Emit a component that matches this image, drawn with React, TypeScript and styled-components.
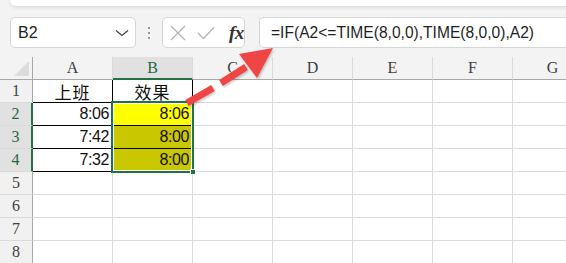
import React from "react";
import styled, { createGlobalStyle } from "styled-components";

const Global = createGlobalStyle`
  html, body { margin: 0; padding: 0; }
  body { background: #f3f3f3; width: 566px; height: 263px; overflow: hidden; font-family: "Liberation Sans", Arial, sans-serif; }
  * { box-sizing: border-box; }
`;

const Page = styled.div`
  position: relative;
  width: 566px;
  height: 263px;
  overflow: hidden;
  background: #f3f3f3;
`;

const TopPanel = styled.div`
  margin-left: 10px;
  width: 580px;
  height: 6px;
  background: #fff;
  border-radius: 0 0 8px 8px;
  box-shadow: 0 1px 4px rgba(0, 0, 0, 0.12);
`;

const Toolbar = styled.div`
  display: flex;
  align-items: center;
  height: 31px;
  margin-top: 11px;
  padding-left: 10px;
  width: 600px;
`;

const Box = styled.div<{ $w: number }>`
  display: flex;
  align-items: center;
  height: 31px;
  width: ${(p) => p.$w}px;
  flex: none;
  background: #fff;
  border: 1px solid #d6d6d6;
  border-radius: 5px;
`;

const NameBox = styled(Box)`
  justify-content: space-between;
  padding: 0 6px 0 7px;
  font-size: 16px;
  color: #1f1f1f;
`;

const Dots = styled.div`
  display: flex;
  flex: none;
  flex-direction: column;
  gap: 3px;
  width: 26px;
  align-items: center;
  & > span {
    width: 2px;
    height: 2px;
    background: #9a9a9a;
  }
`;

const FuncBox = styled(Box)`
  padding-left: 6px;
  gap: 10px;
`;

const Fx = styled.span`
  font-family: "Liberation Serif", "Times New Roman", serif;
  font-style: italic;
  font-weight: bold;
  font-size: 19px;
  color: #333;
  margin-left: 4px;
  letter-spacing: -0.5px;
`;

const FormulaBox = styled(Box)`
  margin-left: 14px;
  padding-left: 11px;
  font-size: 15.6px;
  color: #1f1f1f;
  border-right: none;
  border-radius: 5px 0 0 5px;
`;

const Sheet = styled.div`
  margin-top: 9px;
  display: grid;
  grid-template-columns: 33px repeat(7, 80px);
  grid-template-rows: repeat(9, 23px);
  background: #fff;
`;

const Corner = styled.div`
  grid-row: 1;
  grid-column: 1;
  background: #f3f3f3;
  border-right: 1px solid #a8a8a8;
  border-bottom: 1px solid #a8a8a8;
  position: relative;
  &::after {
    content: "";
    position: absolute;
    right: 3px;
    bottom: 3px;
    width: 0;
    height: 0;
    border-left: 15px solid transparent;
    border-bottom: 15px solid #dcdcdc;
  }
`;

const ColHead = styled.div<{ $sel?: boolean; $col: number }>`
  grid-row: 1;
  grid-column: ${(p) => p.$col};
  display: flex;
  align-items: center;
  justify-content: center;
  font-family: "Liberation Serif", "Times New Roman", serif;
  font-size: 16px;
  color: ${(p) => (p.$sel ? "#1e6b3e" : "#404040")};
  background: ${(p) => (p.$sel ? "#e1e1e1" : "#f3f3f3")};
  border-right: 1px solid #dadada;
  border-bottom: ${(p) => (p.$sel ? "2px solid #217346" : "1px solid #a8a8a8")};
  padding-top: ${(p) => (p.$sel ? "1px" : "0")};
`;

const RowHead = styled.div<{ $sel?: boolean; $row: number }>`
  grid-row: ${(p) => p.$row};
  grid-column: 1;
  display: flex;
  align-items: center;
  justify-content: center;
  font-family: "Liberation Serif", "Times New Roman", serif;
  font-size: 16px;
  color: ${(p) => (p.$sel ? "#1e6b3e" : "#404040")};
  background: ${(p) => (p.$sel ? "#e1e1e1" : "#f1f1f1")};
  border-bottom: 1px solid #dadada;
  border-right: ${(p) => (p.$sel ? "2px solid #217346" : "1px solid #a8a8a8")};
`;

const Cell = styled.div<{ $fill?: string; $align?: string; $boxed?: boolean; $row: number; $col: number }>`
  grid-row: ${(p) => p.$row};
  grid-column: ${(p) => p.$col};
  display: flex;
  align-items: center;
  justify-content: ${(p) => (p.$align === "right" ? "flex-end" : "center")};
  padding: 0 3px;
  font-family: "Liberation Sans", "Noto Sans CJK SC", sans-serif;
  font-size: 16px;
  letter-spacing: ${(p) => (p.$align === "right" ? "-0.4px" : "0")};
  color: #111;
  background: ${(p) => p.$fill || "#fff"};
  border-right: 1px solid ${(p) => (p.$boxed ? "#000" : "#dadada")};
  border-bottom: 1px solid ${(p) => (p.$boxed ? "#000" : "#dadada")};
`;

const CJK = styled.span`
  font-family: "Noto Sans CJK SC", sans-serif;
  font-size: 17px;
  letter-spacing: 1px;
`;

const Selection = styled.div`
  grid-column: 3;
  grid-row: 3 / 6;
  margin: -2px -1px -1px -2px;
  border: 2px solid #217346;
  box-shadow: inset 0 0 0 1px #fff;
  pointer-events: none;
  position: relative;
`;

const Handle = styled.div`
  position: absolute;
  right: -4px;
  bottom: -4px;
  width: 6px;
  height: 6px;
  background: #217346;
  border: 1px solid #fff;
`;

const ArrowLayer = styled.svg`
  position: absolute;
  left: 0;
  top: 0;
  pointer-events: none;
`;

const cols = ["A", "B", "C", "D", "E", "F", "G"];

type CellData = { text?: string; fill?: string; align?: string; boxed?: boolean; cjk?: boolean };

const data: Record<string, CellData> = {
  "1-0": { text: "上班", boxed: true, cjk: true },
  "1-1": { text: "效果", boxed: true, cjk: true },
  "2-0": { text: "8:06", boxed: true, align: "right" },
  "2-1": { text: "8:06", boxed: true, align: "right", fill: "#ffff00" },
  "3-0": { text: "7:42", boxed: true, align: "right" },
  "3-1": { text: "8:00", boxed: true, align: "right", fill: "#c9c700" },
  "4-0": { text: "7:32", boxed: true, align: "right" },
  "4-1": { text: "8:00", boxed: true, align: "right", fill: "#c9c700" },
};

export default function App() {
  const rows = [1, 2, 3, 4, 5, 6, 7, 8];
  return (
    <Page>
      <Global />
      <TopPanel />
      <Toolbar>
        <NameBox $w={126}>
          <span>B2</span>
          <svg width="14" height="8" viewBox="0 0 14 8">
            <path d="M1 1.5 L7 6.5 L13 1.5" fill="none" stroke="#444" strokeWidth="1.3" />
          </svg>
        </NameBox>
        <Dots>
          <span />
          <span />
          <span />
        </Dots>
        <FuncBox $w={83}>
          <svg width="18" height="18" viewBox="0 0 18 18">
            <path d="M2 2 L16 16 M16 2 L2 16" stroke="#b4b4b4" strokeWidth="1.3" fill="none" />
          </svg>
          <svg width="18" height="14" viewBox="0 0 18 14">
            <path d="M1 7 L6.5 12.5 L17 1.5" stroke="#b4b4b4" strokeWidth="1.3" fill="none" />
          </svg>
          <Fx>fx</Fx>
        </FuncBox>
        <FormulaBox $w={320}>=IF(A2&lt;=TIME(8,0,0),TIME(8,0,0),A2)</FormulaBox>
      </Toolbar>
      <Sheet>
        <Corner />
        {cols.map((c, ci) => (
          <ColHead key={c} $col={ci + 2} $sel={c === "B"}>
            {c}
          </ColHead>
        ))}
        {rows.map((r) => (
          <React.Fragment key={r}>
            <RowHead $row={r + 1} $sel={r >= 2 && r <= 4}>
              {r}
            </RowHead>
            {cols.map((c, ci) => {
              const d = data[`${r}-${ci}`] || {};
              return (
                <Cell key={c} $row={r + 1} $col={ci + 2} $fill={d.fill} $align={d.align} $boxed={d.boxed}>
                  {d.cjk ? <CJK>{d.text}</CJK> : d.text}
                </Cell>
              );
            })}
          </React.Fragment>
        ))}
        <Selection>
          <Handle />
        </Selection>
      </Sheet>
      <ArrowLayer width="566" height="263" viewBox="0 0 566 263">
        <defs>
          <filter id="sh" x="-20%" y="-20%" width="140%" height="140%">
            <feDropShadow dx="1" dy="1.5" stdDeviation="1.2" floodColor="#000" floodOpacity="0.25" />
          </filter>
        </defs>
        <g filter="url(#sh)" fill="#f04545" stroke="none">
          <path d="M187 103 L213 88" stroke="#f04545" strokeWidth="7" />
          <path d="M221 83 L246 67" stroke="#f04545" strokeWidth="7" />
          <path d="M273 48 L239 54 L257 78 Z" />
        </g>
      </ArrowLayer>
    </Page>
  );
}
